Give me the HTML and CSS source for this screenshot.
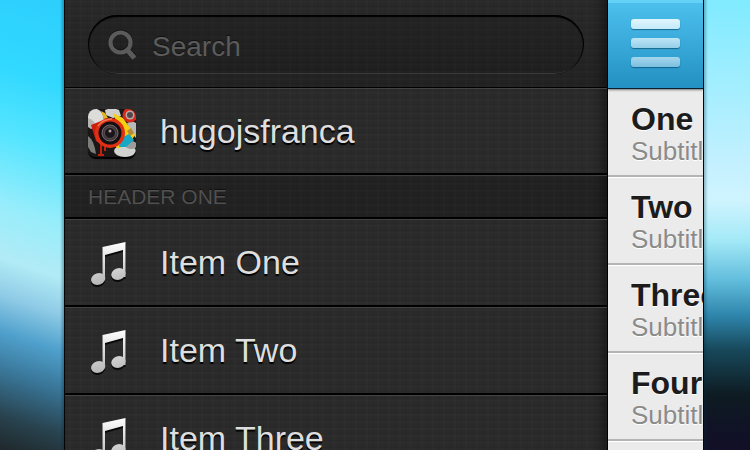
FILE: index.html
```html
<!DOCTYPE html>
<html lang="en">
<head>
<meta charset="utf-8">
<title>Side menu</title>
<link rel="stylesheet" href="styles.css">
</head>
<body>
<svg class="defs" aria-hidden="true">
  <defs>
    <linearGradient id="metal" x1="0" y1="0" x2="0" y2="44" gradientUnits="userSpaceOnUse">
      <stop offset="0" stop-color="#fff"/><stop offset="1" stop-color="#b4b4b4"/>
    </linearGradient>
    <symbol id="note" viewBox="0 0 36 44">
      <path fill="url(#metal)" d="M11.500 5 34.500 0V35H32V8L14 13V38H11.500Z"/>
      <ellipse fill="url(#metal)" cx="7.200" cy="37" rx="7.200" ry="5.800" transform="rotate(-18 7.200 37)"/>
      <ellipse fill="url(#metal)" cx="27.400" cy="32" rx="7.200" ry="5.800" transform="rotate(-18 27.400 32)"/>
    </symbol>
  </defs>
</svg>
<div class="stage">
  <div class="backdrop backdrop-left"></div>
  <main class="device">
    <nav class="menu">
      <form class="search-row">
        <label class="search">
          <svg class="search-icon" viewBox="0 0 28 30" role="img" aria-label="Search">
            <circle cx="12.500" cy="12.500" r="10" fill="none" stroke="currentColor" stroke-width="4.200"/>
            <path d="M19 19.500 26.500 28" fill="none" stroke="currentColor" stroke-width="5"/>
          </svg>
          <input class="search-field" type="text" placeholder="Search">
        </label>
      </form>
      <a class="row user" href="#">
        <svg class="avatar" viewBox="0 0 48 48" aria-hidden="true">
          <rect width="48" height="48" fill="#1b1717"/>
          <path fill="#dcdcda" d="M2 0H9Q16 3 16 11L8 17 0 14V4Z"/>
          <path fill="#b4b4b2" d="M0 9Q6 11 9 18L3 20 0 18Z"/>
          <path fill="#cfcfcd" d="M17 1Q24-2 31 1L33 7 25 9 18 6Z"/>
          <path fill="#e2b61c" d="M13 2 17 4 20 9 16 10Z"/>
          <path fill="#b9b9b7" d="M39 14Q44 11 48 14V29L42 22Z"/>
          <ellipse fill="#d2d2d0" cx="37" cy="42" rx="11" ry="6"/>
          <ellipse fill="#9c9c9a" cx="43" cy="36" rx="6" ry="4"/>
          <path fill="#7d7d7b" d="M0 27Q6 31 8 45L3 43 0 38Z"/>
          <path fill="#f4cf12" d="M25 4 35 9 47 26 42 34 29 40 27 35 33 24Z"/>
          <path fill="#b98a35" d="M39 22 43 19 46 24 42 27Z"/>
          <path fill="#18a8c6" d="M33 29 41 25 46 31 38 38 31 38Z"/>
          <path fill="#c9200d" d="M3 16 13 12 14 36 8 32Z"/>
          <path fill="none" stroke="#c5200e" stroke-width="2" d="M13 35V46M10 46H16M17 37V42"/>
          <circle cx="22" cy="24" r="15" fill="#df3015"/>
          <path fill="none" stroke="#f2764e" stroke-width="1.500" d="M10 17Q15 10 24 10"/>
          <circle cx="22" cy="24" r="11.500" fill="#141012"/>
          <circle cx="22" cy="24" r="8" fill="#41383c" stroke="#75686c"/>
          <circle cx="22" cy="24" r="5.500" fill="#18161a" stroke="#5a4c50"/>
          <circle cx="22" cy="22" r="1.500" fill="#b99"/>
          <circle cx="42" cy="6" r="7.500" fill="#d92816"/>
          <circle cx="42" cy="6" r="4.500" fill="#b5aaa8"/>
          <circle cx="42" cy="6" r="3" fill="#54474a"/>
        </svg>
        <span class="label">hugojsfranca</span>
      </a>
      <h2 class="section">HEADER ONE</h2>
      <a class="row" href="#"><svg class="note"><use href="#note" width="36" height="44"/></svg><span class="label">Item One</span></a>
      <a class="row" href="#"><svg class="note"><use href="#note" width="36" height="44"/></svg><span class="label">Item Two</span></a>
      <a class="row" href="#"><svg class="note"><use href="#note" width="36" height="44"/></svg><span class="label">Item Three</span></a>
    </nav>
    <section class="content">
      <header class="navbar">
        <button class="toggle" type="button" aria-label="Menu">
          <span class="bar bar-top"></span><span class="bar bar-middle"></span><span class="bar bar-bottom"></span>
        </button>
      </header>
      <ul class="list">
        <li class="entry"><h3 class="title">One</h3><p class="subtitle">Subtitle</p></li>
        <li class="entry"><h3 class="title">Two</h3><p class="subtitle">Subtitle</p></li>
        <li class="entry"><h3 class="title">Three</h3><p class="subtitle">Subtitle</p></li>
        <li class="entry"><h3 class="title">Four</h3><p class="subtitle">Subtitle</p></li>
        <li class="entry"></li>
      </ul>
    </section>
  </main>
  <div class="backdrop backdrop-right"></div>
</div>
</body>
</html>
```
FILE: styles.css
```css
* { box-sizing: border-box; }
body {
  margin: 0;
  overflow: hidden;
  font-family: "Liberation Sans", Arial, sans-serif;
}
.defs { position: absolute; width: 0; height: 0; }
.stage {
  display: grid;
  grid-template-columns: 64px minmax(0, 1fr) 46px;
  height: 100vh;
  overflow: hidden;
}
.backdrop-left {
  background:
    linear-gradient(90deg, transparent 60px, rgba(0, 40, 60, .35)),
    linear-gradient(198deg, #2dcffd 0, #31d8ff 80px, #55e5ff 145px, #98edfb 215px, #b1ebf6 265px, #8fcbe6 300px, #4fa0cc 335px, #397698 372px, #28424e 415px, #202a2e 445px);
}
.backdrop-right {
  background:
    linear-gradient(270deg, transparent 42px, rgba(0, 40, 60, .3)),
    linear-gradient(180deg, #80eaff 0, #a0eeff 80px, #c4f0ff 165px, #cff4fe 200px, #a4e9f7 240px, #62bddc 280px, #2f86ad 315px, #17485a 350px, #0e1b22 395px, #111027 440px);
}
.device {
  display: grid;
  grid-template-columns: minmax(0, 1fr) 95px;
  overflow: hidden;
  border: solid #050505;
  border-width: 0 1px;
}
.menu {
  border-right: 1px solid #000;
  background:
    linear-gradient(270deg, rgba(0, 0, 0, .35), transparent 14px),
    repeating-linear-gradient(90deg, rgba(0, 0, 0, .05) 0 1px, transparent 1px 4px, rgba(255, 255, 255, .012) 4px 6px, transparent 6px 11px),
    repeating-linear-gradient(0deg, rgba(0, 0, 0, .05) 0 1px, transparent 1px 4px, rgba(255, 255, 255, .012) 4px 6px, transparent 6px 7px),
    #2a2a2a;
}
.search-row {
  height: 88px;
  padding: 15px 23px 0;
  border-bottom: 1px solid #000;
  background: linear-gradient(rgba(0, 0, 0, .03), rgba(0, 0, 0, .2));
}
.search {
  display: flex;
  align-items: center;
  gap: 16px;
  height: 59px;
  padding: 0 20px;
  border-radius: 30px;
  color: #5b5b5b;
  background: rgba(0, 0, 0, .1);
  box-shadow: inset 0 2px 1px #000, inset 1px 0 1px #000, inset -1px 0 1px #000, inset 0 -1px 0 #484848;
}
.search-icon { width: 28px; height: 30px; flex: none; filter: drop-shadow(0 -1px 0 #111); }
.search-field {
  flex: 1;
  min-width: 0;
  padding: 4px 0 0;
  border: 0;
  outline: 0;
  background: none;
  color: inherit;
  font: 28px "Liberation Sans", Arial, sans-serif;
}
.search-field::placeholder { color: #5b5b5b; opacity: 1; text-shadow: 0 -1px 0 #111; }
.row {
  display: flex;
  align-items: center;
  gap: 24px;
  height: 88px;
  padding: 0 23px;
  border-bottom: 2px solid #000;
  box-shadow: inset 0 1px 0 #434343;
  color: #dedede;
  text-decoration: none;
}
.user { height: 87px; }
.label { font-size: 34px; line-height: 40px; text-shadow: 0 2px 1px #000; }
.avatar { width: 48px; height: 48px; flex: none; border-radius: 8px; margin-top: 4px; box-shadow: 0 2px 1px #000; }
.note { width: 48px; height: 46px; flex: none; margin-top: 5px; padding-left: 3px; filter: drop-shadow(0 2px 0 #080808); }
.section {
  height: 44px;
  margin: 0;
  padding: 0 23px;
  border-bottom: 2px solid #000;
  background: rgba(0, 0, 0, .2);
  box-shadow: inset 0 1px 0 #3d3d3d;
  color: #505050;
  font-size: 21px;
  font-weight: 400;
  line-height: 44px;
  text-shadow: 0 -1px 0 #101010;
}
.content { overflow: hidden; background: #ebebeb; }
.navbar {
  height: 89px;
  padding: 19px 23px 0;
  border-bottom: 1px solid #07222e;
  background: linear-gradient(#4fc1ee, #2391c3);
  box-shadow: inset 0 3px 0 #64d2f6, 0 1px 2px rgba(0, 0, 0, .5);
}
.toggle {
  display: flex;
  flex-direction: column;
  gap: 9px;
  padding: 0;
  border: 0;
  background: none;
}
.bar {
  width: 49px;
  height: 10px;
  border-radius: 3px;
  box-shadow: 0 1px 1px rgba(0, 60, 90, .6);
}
.bar-top { background: linear-gradient(#e0f5fd, #c4eaf9); }
.bar-middle { background: linear-gradient(#bfe5f5, #95cfe9); }
.bar-bottom { background: linear-gradient(#a5d7ed, #7cbfdf); }
.list { margin: 0; padding: 0; list-style: none; }
.entry {
  height: 88px;
  padding: 12px 0 0 23px;
  border-bottom: 2px solid #b4b4b4;
  white-space: nowrap;
}
.entry + .entry { box-shadow: inset 0 1px 0 #fff; }
.title { margin: 0; color: #1c1c1c; font-size: 32px; line-height: 36px; text-shadow: 0 1px 0 #fff; }
.subtitle { margin: 0; color: #8b8b8b; font-size: 26px; line-height: 28px; text-shadow: 0 1px 0 #fff; }
```
